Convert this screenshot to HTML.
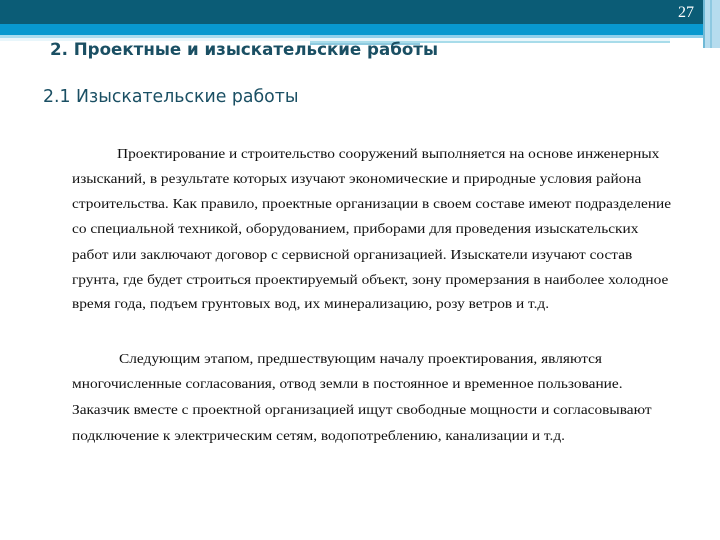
<!DOCTYPE html>
<html><head><meta charset="utf-8"><style>
body{margin:0;width:720px;height:540px;background:#fff;position:relative;overflow:hidden;font-family:"Liberation Serif",serif;}
.a{position:absolute}
.l{position:absolute;font-size:13.6px;color:#111;white-space:nowrap;left:72px;transform:scaleX(1.13);transform-origin:left}
</style></head><body>
<div class="a" style="left:0;top:0;width:703px;height:24px;background:#0b5c76"></div>
<div class="a" style="left:0;top:24px;width:703px;height:11px;background:#0898cf"></div>
<div class="a" style="left:0;top:35px;width:310px;height:3px;background:#a9dcef"></div>
<div class="a" style="left:310px;top:35px;width:393px;height:3px;background:#8fd0ec"></div>
<div class="a" style="left:0;top:38px;width:670px;height:3px;background:#e8f6fb"></div>
<div class="a" style="left:310px;top:41px;width:110px;height:4px;background:#8fcbe0"></div>
<div class="a" style="left:310px;top:41px;width:360px;height:2px;background:#a8dcea"></div>
<div class="a" style="left:703px;top:0;width:17px;height:48px;background:#b6dcee"></div>
<div class="a" style="left:703px;top:0;width:2px;height:48px;background:#6fb9d6"></div>
<div class="a" style="left:710px;top:0;width:2px;height:48px;background:#8ec9e1"></div>
<div class="a" style="left:678px;top:4px;font-size:16px;color:#fff">27</div>
<div class="a" style="left:50px;top:40px;font-family:'DejaVu Sans',sans-serif;font-weight:bold;font-size:16.5px;color:#1a4f63;white-space:nowrap;transform:scaleX(1.01);transform-origin:left">2. Проектные и изыскательские работы</div>
<div class="a" style="left:43px;top:87px;font-family:'DejaVu Sans Condensed','DejaVu Sans',sans-serif;font-size:17.5px;color:#1a4f63;white-space:nowrap;transform:scaleX(1.1);transform-origin:left">2.1 Изыскательские работы</div>
<div class="l" style="left:117px;top:146px">Проектирование и строительство сооружений выполняется на основе инженерных</div>
<div class="l" style="top:171px">изысканий, в результате которых изучают экономические и природные условия района</div>
<div class="l" style="top:196px">строительства. Как правило, проектные организации в своем составе имеют подразделение</div>
<div class="l" style="top:221px">со специальной техникой, оборудованием, приборами для проведения изыскательских</div>
<div class="l" style="top:247px">работ или заключают договор с сервисной организацией. Изыскатели изучают состав</div>
<div class="l" style="top:272px">грунта, где будет строиться проектируемый объект, зону промерзания в наиболее холодное</div>
<div class="l" style="top:296px">время года, подъем грунтовых вод, их минерализацию, розу ветров и т.д.</div>
<div class="l" style="left:119px;top:351px">Следующим этапом, предшествующим началу проектирования, являются</div>
<div class="l" style="top:376px">многочисленные согласования, отвод земли в постоянное и временное пользование.</div>
<div class="l" style="top:402px">Заказчик вместе с проектной организацией ищут свободные мощности и согласовывают</div>
<div class="l" style="top:428px">подключение к электрическим сетям, водопотреблению, канализации и т.д.</div>
</body></html>
